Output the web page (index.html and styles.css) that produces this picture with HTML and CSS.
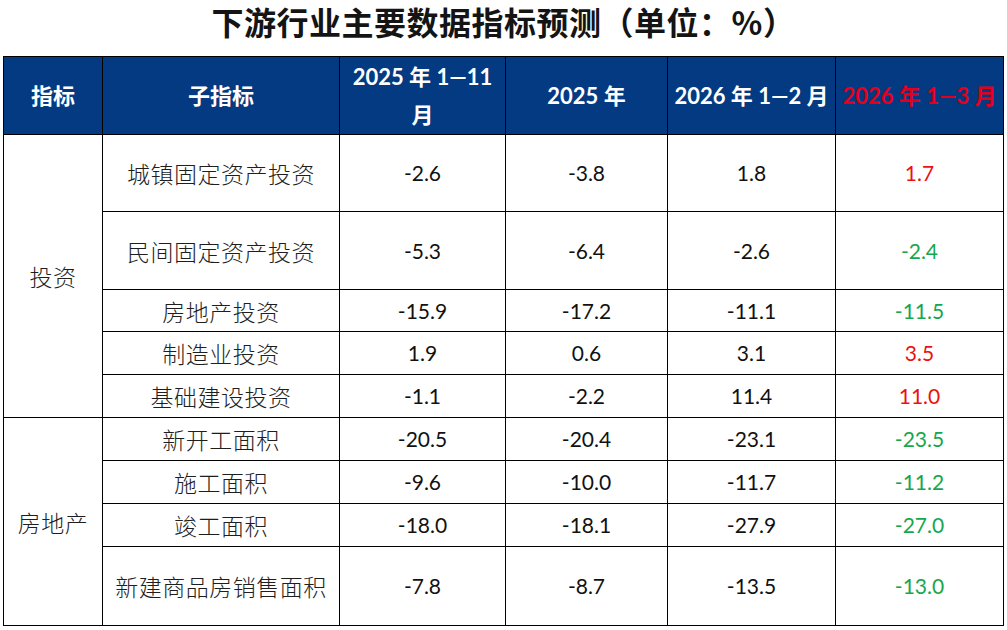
FILE: index.html
```html
<!DOCTYPE html>
<html lang="zh-CN">
<head>
<meta charset="utf-8">
<title>下游行业主要数据指标预测</title>
<link rel="stylesheet" href="styles.css">
</head>
<body>
<h1 class="title">下游行业主要数据指标预测（单位：%）</h1>
<table class="data">
  <colgroup>
    <col class="c1"><col class="c2"><col class="c3"><col class="c4"><col class="c5"><col class="c6">
  </colgroup>
  <thead>
    <tr class="head">
      <th>指标</th>
      <th>子指标</th>
      <th>2025 年 1—11<br>月</th>
      <th>2025 年</th>
      <th>2026 年 1—2 月</th>
      <th class="hl">2026 年 1—3 月</th>
    </tr>
  </thead>
  <tbody>
    <tr class="r77">
      <td class="grp" rowspan="5">投资</td>
      <td class="name">城镇固定资产投资</td>
      <td>-2.6</td><td>-3.8</td><td>1.8</td><td class="up">1.7</td>
    </tr>
    <tr class="r78">
      <td class="name">民间固定资产投资</td>
      <td>-5.3</td><td>-6.4</td><td>-2.6</td><td class="down">-2.4</td>
    </tr>
    <tr class="r42">
      <td class="name">房地产投资</td>
      <td>-15.9</td><td>-17.2</td><td>-11.1</td><td class="down">-11.5</td>
    </tr>
    <tr class="r43">
      <td class="name">制造业投资</td>
      <td>1.9</td><td>0.6</td><td>3.1</td><td class="up">3.5</td>
    </tr>
    <tr class="r43">
      <td class="name">基础建设投资</td>
      <td>-1.1</td><td>-2.2</td><td>11.4</td><td class="up">11.0</td>
    </tr>
    <tr class="r43">
      <td class="grp" rowspan="4">房地产</td>
      <td class="name">新开工面积</td>
      <td>-20.5</td><td>-20.4</td><td>-23.1</td><td class="down">-23.5</td>
    </tr>
    <tr class="r43">
      <td class="name">施工面积</td>
      <td>-9.6</td><td>-10.0</td><td>-11.7</td><td class="down">-11.2</td>
    </tr>
    <tr class="r43">
      <td class="name">竣工面积</td>
      <td>-18.0</td><td>-18.1</td><td>-27.9</td><td class="down">-27.0</td>
    </tr>
    <tr class="r79">
      <td class="name">新建商品房销售面积</td>
      <td>-7.8</td><td>-8.7</td><td>-13.5</td><td class="down">-13.0</td>
    </tr>
  </tbody>
</table>
</body>
</html>
```

FILE: styles.css
```css
html, body {
  margin: 0;
  padding: 0;
  background: #ffffff;
}

body {
  width: 1007px;
  height: 630px;
  overflow: hidden;
  font-family: Lato, "Noto Sans CJK SC", sans-serif;
  color: #111111;
}

.title {
  margin: 0;
  height: 56px;
  padding-top: 0;
  box-sizing: border-box;
  line-height: 42px;
  text-align: center;
  font-family: "Noto Sans CJK SC", sans-serif;
  font-size: 32px;
  letter-spacing: 0.5px;
  font-weight: 700;
  color: #141414;
}

.data {
  margin-left: 3px;
  width: 1000px;
  table-layout: fixed;
  border-collapse: collapse;
}

.c1 { width: 99px; }
.c2 { width: 237px; }
.c3 { width: 166px; }
.c4 { width: 162px; }
.c5 { width: 168px; }
.c6 { width: 168px; }

.data th,
.data td {
  border: 1px solid #000000;
  padding: 0;
  text-align: center;
  vertical-align: middle;
}

.head {
  height: 78px;
}

.head th {
  background: #033a82;
  color: #ffffff;
  font-size: 22px;
  font-weight: 700;
  line-height: 38px;
  white-space: nowrap;
}

.head th.hl {
  color: #e3001b;
}

.data td {
  font-size: 21px;
  line-height: 26px;
  color: #111111;
}

.data td.name,
.data td.grp {
  font-family: "Noto Sans CJK SC", sans-serif;
  font-size: 23px;
  letter-spacing: 0.5px;
  font-weight: 300;
  color: #1e1e1e;
}

.data td.up { color: #ee1111; }
.data td.down { color: #16a74e; }

.r77 { height: 77px; }
.r78 { height: 78px; }
.r79 { height: 79px; }
.r42 { height: 42px; }
.r43 { height: 43px; }
```
